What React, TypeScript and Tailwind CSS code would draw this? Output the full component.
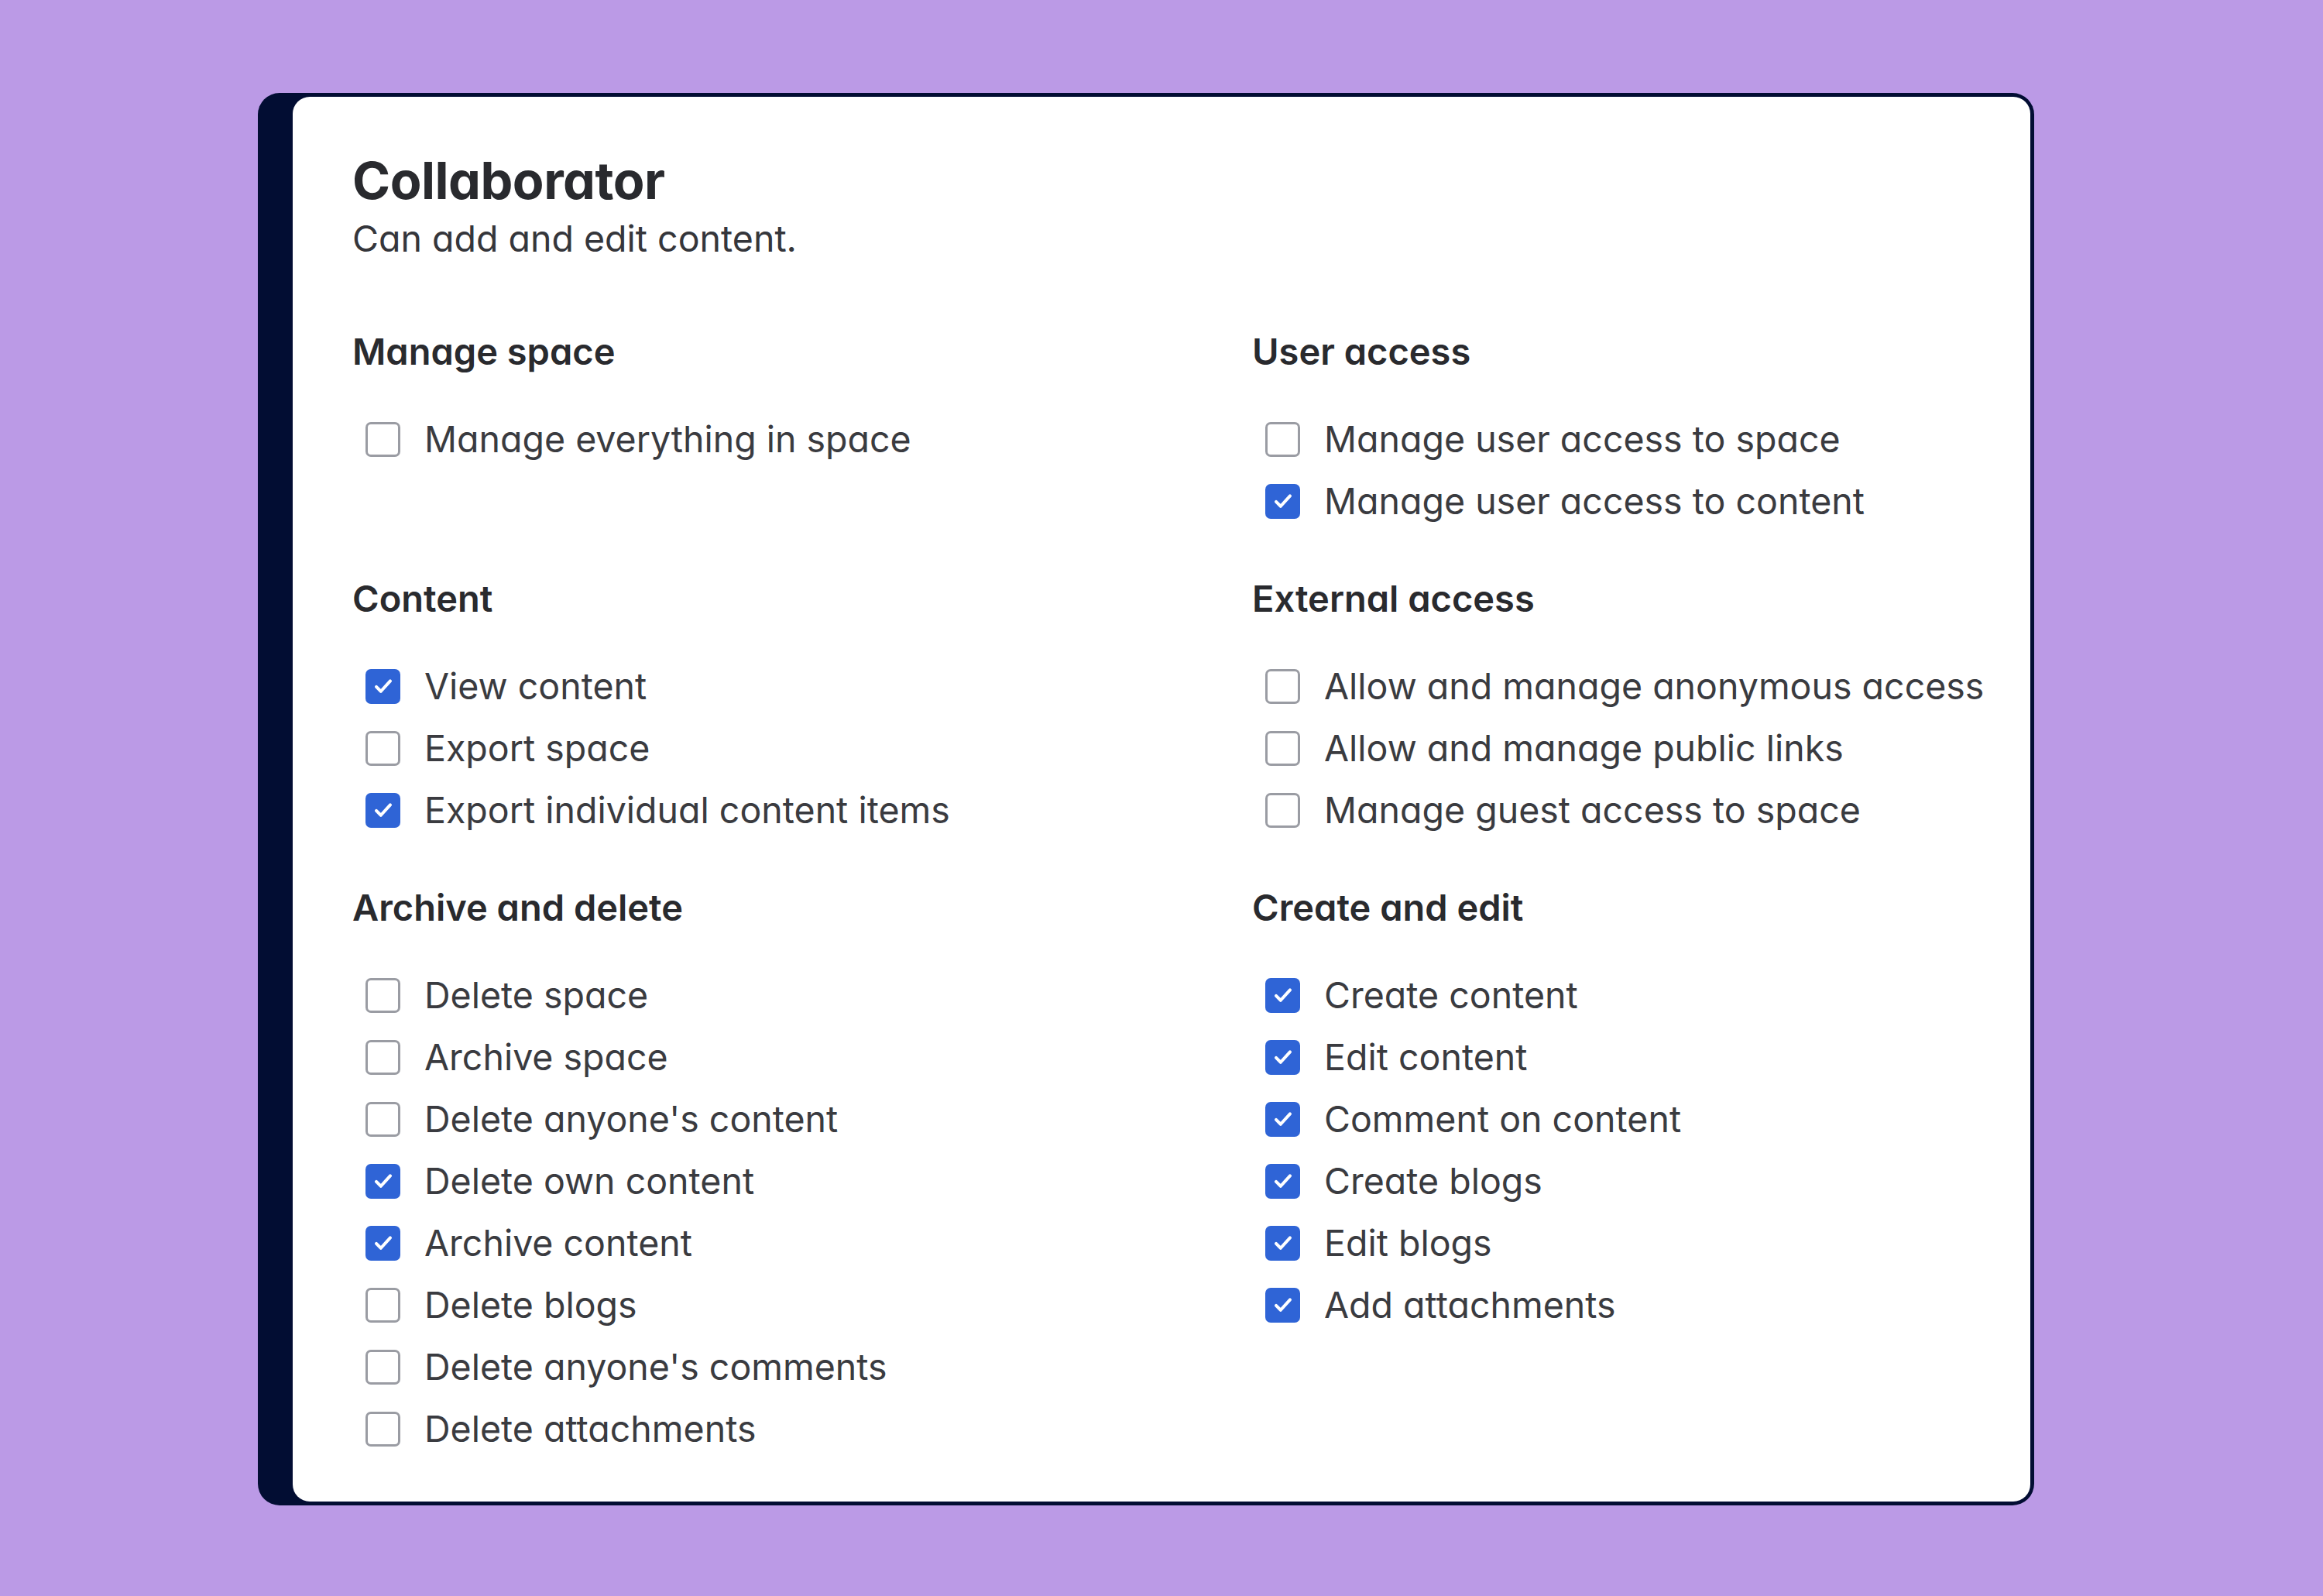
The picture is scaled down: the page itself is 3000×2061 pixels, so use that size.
const font = { fontFamily: 'Inter, "Noto Sans", sans-serif', fontFeatureSettings: "'cv11'" };

type Perm = { label: string; checked: boolean };
type Section = { title: string; items: Perm[] };

const sections: Section[] = [
  { title: 'Manage space', items: [{ label: 'Manage everything in space', checked: false }] },
  {
    title: 'User access',
    items: [
      { label: 'Manage user access to space', checked: false },
      { label: 'Manage user access to content', checked: true },
    ],
  },
  {
    title: 'Content',
    items: [
      { label: 'View content', checked: true },
      { label: 'Export space', checked: false },
      { label: 'Export individual content items', checked: true },
    ],
  },
  {
    title: 'External access',
    items: [
      { label: 'Allow and manage anonymous access', checked: false },
      { label: 'Allow and manage public links', checked: false },
      { label: 'Manage guest access to space', checked: false },
    ],
  },
  {
    title: 'Archive and delete',
    items: [
      { label: 'Delete space', checked: false },
      { label: 'Archive space', checked: false },
      { label: "Delete anyone's content", checked: false },
      { label: 'Delete own content', checked: true },
      { label: 'Archive content', checked: true },
      { label: 'Delete blogs', checked: false },
      { label: "Delete anyone's comments", checked: false },
      { label: 'Delete attachments', checked: false },
    ],
  },
  {
    title: 'Create and edit',
    items: [
      { label: 'Create content', checked: true },
      { label: 'Edit content', checked: true },
      { label: 'Comment on content', checked: true },
      { label: 'Create blogs', checked: true },
      { label: 'Edit blogs', checked: true },
      { label: 'Add attachments', checked: true },
    ],
  },
];

const Checkbox = ({ checked }: { checked: boolean }) =>
  checked ? (
    <span className="flex h-[45px] w-[45px] shrink-0 items-center justify-center rounded-[7px] bg-[#2f64d6]">
      <svg viewBox="0 0 24 24" className="h-[36px] w-[36px]" fill="none">
        <path d="M6 12.6l3.9 3.9L18 7.6" stroke="#fff" strokeWidth="2.7" strokeLinecap="round" strokeLinejoin="round" />
      </svg>
    </span>
  ) : (
    <span className="block h-[45px] w-[45px] shrink-0 rounded-[7px] border-[3px] border-[#9a9ca3] bg-white" />
  );

const PermissionRow = ({ perm }: { perm: Perm }) => (
  <li className="flex h-[80px] items-center gap-[31px] pl-[17px]">
    <Checkbox checked={perm.checked} />
    <span className="text-[46.5px] leading-none text-[#3a3b40]">{perm.label}</span>
  </li>
);

export default function App() {
  return (
    <div className="min-h-screen w-full bg-[#bb9ae6] pl-[333px] pt-[120px]" style={font}>
      <div className="w-[2294px] rounded-[28px] bg-[#020d33] py-[5px] pr-[5px] pl-[45px]">
        <div className="rounded-[22px] bg-white pt-[71px] pb-[54px] pl-[77px]">
          <h1 className="text-[66.5px] font-bold leading-[74px] tracking-[-0.5px] text-[#292a2e]">Collaborator</h1>
          <p className="mt-[10px] text-[46.5px] leading-[56px] text-[#35363b]">Can add and edit content.</p>
          <div className="mt-[90px] grid grid-cols-[1162px_1fr] gap-y-[58px]">
            {sections.map((section) => (
              <section key={section.title}>
                <h2 className="text-[47px] font-semibold leading-[56px] text-[#292a2e]">{section.title}</h2>
                <ul className="mt-[45px]">
                  {section.items.map((perm) => (
                    <PermissionRow key={perm.label} perm={perm} />
                  ))}
                </ul>
              </section>
            ))}
          </div>
        </div>
      </div>
    </div>
  );
}
